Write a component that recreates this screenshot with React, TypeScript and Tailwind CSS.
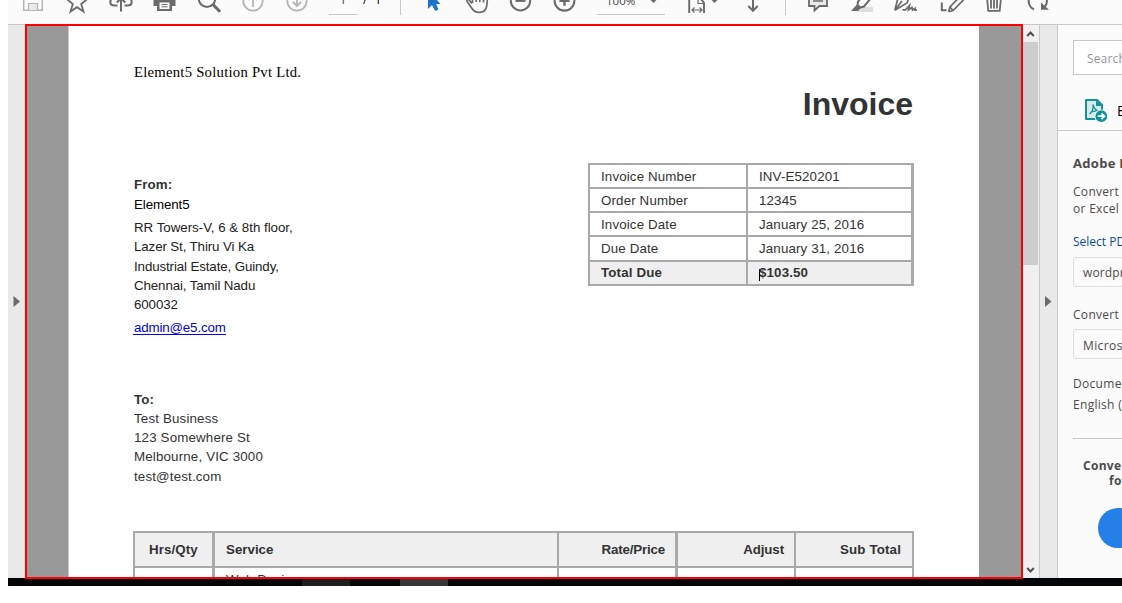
import type { ReactNode } from "react";

const sans = "font-['Liberation_Sans',Arial,sans-serif]";

function Tool({ w = "w-11", color = "text-[#6b6b6b]", children }: { w?: string; color?: string; children: ReactNode }) {
  return (
    <svg
      className={`h-5 shrink-0 ${w} ${color}`}
      viewBox="0 0 44 20"
      preserveAspectRatio="xMidYMin slice"
      fill="none"
      stroke="currentColor"
      strokeWidth="1.8"
    >
      {children}
    </svg>
  );
}

function Toolbar() {
  return (
    <div className="ml-2 flex h-6 items-start overflow-hidden bg-[#fbfbfb] pl-[3px] font-['Open_Sans',sans-serif] text-[12px] text-[#444]">
      <Tool color="text-[#b5b5b5]">
        <path d="M12.7-6V10.3H31.3V-6" strokeWidth="1.5" />
        <path d="M17.5 10V3.5H26.5V10" fill="#e9e9e9" strokeWidth="1.2" />
      </Tool>
      <Tool>
        <path d="M22-8L24.5-1L32-.7L26.2 4L28.5 11.5L22 7.2L15.5 11.5L17.8 4L12-.7L19.5-1Z" strokeWidth="1.8" />
      </Tool>
      <Tool>
        <path d="M18.5 5.5H15.5C10 5.5 10-1 15-2M25.5 5.5H28.5C34 5.5 34-1 29-2M22 11.5V-2M17.7 2.5L22-1.5L26.3 2.5" strokeWidth="2" />
      </Tool>
      <Tool w="w-[43px]">
        <path d="M11-4H33V6H29.5V11H14.5V6H11Z" fill="currentColor" stroke="none" />
        <path d="M17 2.5H27V9H17Z" fill="#fbfbfb" stroke="none" />
        <path d="M19 4.5H25M19 6.8H25" strokeWidth="1" />
      </Tool>
      <Tool w="w-[45px]">
        <circle cx="20.5" cy="-1.2" r="8" strokeWidth="2" />
        <path d="M26 4L33.3 11.5" strokeWidth="3" />
        <path d="M16-.5H24" stroke="#bbb" strokeWidth="1" strokeDasharray="2 1" />
      </Tool>
      <Tool color="text-[#b5b5b5]">
        <circle cx="22" cy="1" r="9.7" />
        <path d="M22 7V-5M18 0L22-3.5L26 0" />
      </Tool>
      <Tool color="text-[#b5b5b5]">
        <circle cx="22" cy="1" r="9.7" />
        <path d="M22-6V6M17.8 2L22 6L26.2 2" />
      </Tool>
      <div className="ml-[10px] flex h-[15px] w-7 justify-center border-b border-[#c8c8c8] leading-[18px]">
        <span className="-mt-[9px]">1</span>
      </div>
      <div className="ml-[6px] flex w-[37px] gap-[7px] leading-[18px] text-black">
        <span className="-mt-[9px]">/</span>
        <span className="-mt-[9px]">1</span>
      </div>
      <div className="h-[15px] w-px bg-[#c8c8c8]" />
      <div className="w-[11px]" />
      <Tool color="text-[#1d72c9]">
        <path d="M16-10V9L20 5L23.2 11L26.5 9.5L24 4H28.5Z" fill="currentColor" stroke="none" />
      </Tool>
      <Tool w="w-[43px]">
        <path d="M16.5 3.5L13.8.2C12-1.6 10.7 0 12 2L16.5 8.5C19.5 13.7 27.8 13.5 30.2 9C32 6 31.8 2 31.8-5M17 3V-5M20.7 2V-1M24.3 2V-1M28 2.5V-1" strokeWidth="1.7" />
      </Tool>
      <Tool w="w-[43px]">
        <circle cx="22" cy=".7" r="9.7" strokeWidth="2" />
        <path d="M17 .7H27" strokeWidth="2.4" />
      </Tool>
      <Tool w="w-[45px]">
        <circle cx="22" cy=".7" r="9.7" strokeWidth="2" />
        <path d="M17 .7H27M22-4V5.5" strokeWidth="2.4" />
      </Tool>
      <div className="ml-[10px] flex h-[15px] w-[68px] justify-between border-b border-[#c8c8c8] pr-2 pl-[9px] text-[11.5px] leading-[18px]">
        <span className="-mt-[8px]">100%</span>
        <svg className="h-[4px] w-[7px]" viewBox="0 0 7 4"><path d="M0-.5H7L3.5 3Z" fill="#6b6b6b" /></svg>
      </div>
      <div className="w-[10px]" />
      <Tool>
        <path d="M14.2 13V-4H24L29 3V13" strokeWidth="1.9" />
        <path d="M23-4V3.5H29M17 10H27M19.5 7.5L17 10L19.5 12.5M24.5 7.5L27 10L24.5 12.5" strokeWidth="1.2" />
        <path d="M36-.5H43L39.5 3Z" fill="currentColor" stroke="none" />
      </Tool>
      <div className="w-[12px]" />
      <Tool>
        <path d="M22-2V10.5M17.3 6L22 10.8L26.7 6" strokeWidth="2" />
      </Tool>
      <div className="ml-[10px] h-[15px] w-px bg-[#c8c8c8]" />
      <div className="w-[10px]" />
      <Tool>
        <path d="M13-5V6H18.5V10.5L23.5 6H31V-5Z" fill="#e9e9e9" strokeWidth="1.8" />
        <path d="M17 1H27" strokeWidth="1.5" />
      </Tool>
      <Tool>
        <path d="M22 7H33V12H17Z" fill="#dedede" stroke="none" />
        <path d="M24-5L18 1.5L17.5 5L20.5 7.5L24 6.5L31-2" strokeWidth="2" />
        <path d="M16.5 5L11 11H18L21 8Z" fill="currentColor" stroke="none" />
      </Tool>
      <Tool>
        <path d="M10.8 10.3L14.5-4M10.8 10.3L23 3L24.5-1M11 10L18 1M18.5 9.8H21.5L25.5 5.5L24.5 9.8L28 7.5L28.5 10L31 8.3V10.2H33" strokeWidth="1.7" />
      </Tool>
      <Tool>
        <path d="M13.8 2.5V10.2H18.5" strokeWidth="2" />
        <path d="M20.5 11.7L22 7L31.5-3L35 .5L25 10.5L20.5 11.7M22 7L25 10.5" strokeWidth="1.7" />
      </Tool>
      <Tool>
        <path d="M14.8-4L16.3 10.8H27.7L29.2-4M19 0V8.5M22 0V8.5M25 0V8.5" strokeWidth="1.8" />
      </Tool>
      <Tool>
        <path d="M18 9.3C12 6.5 11.5 0 14.5-4M27-5C32-2 32 3 28.5 7" strokeWidth="2" />
        <path d="M25 2.5V9.8H33Z" fill="currentColor" stroke="none" />
      </Tool>
    </div>
  );
}

const details = [
  ["Invoice Number", "INV-E520201"],
  ["Order Number", "12345"],
  ["Invoice Date", "January 25, 2016"],
  ["Due Date", "January 31, 2016"],
  ["Total Due", "$103.50"],
];

function InvoiceDetails() {
  return (
    <div className="mt-[39px] ml-auto grid h-[123px] w-[326px] grid-rows-[22px_22px_22px_23px_22px] gap-[2px] bg-[#a9a9a9] py-[2px] pr-[3px] pl-[2px] text-[13.33px] tracking-[0.14px] text-[#333]">
      {details.map(([label, value], i) => (
        <div key={label} className={`flex gap-[2px] ${i === 4 ? "leading-[22px] font-bold" : "leading-[24px]"}`}>
          <div className={`w-[156px] pl-[11px] ${i === 4 ? "bg-[#efefef]" : "bg-white"}`}>{label}</div>
          <div className={`relative flex-1 pl-[11px] ${i === 4 ? "bg-[#efefef]" : "bg-white"}`}>
            {value}
            {i === 4 && <span className="absolute top-[7px] left-[11px] h-3 w-px bg-black" />}
          </div>
        </div>
      ))}
    </div>
  );
}

function Services() {
  return (
    <div className="-ml-px flex h-[60px] w-[781px] flex-col gap-[2px] bg-[#a9a9a9] p-[2px] text-[13.33px] text-[#333]">
      <div className="grid h-[33px] grid-cols-[77px_345px_118px_119px_118px] leading-[33px] font-bold">
        <div className="bg-[#efefef] pl-[14px] tracking-[0.1px]">Hrs/Qty</div>
        <div className="ml-[3px] bg-[#efefef] pl-[11px]">Service</div>
        <div className="ml-[2px] bg-[#efefef] pr-[10px] text-right tracking-[-0.18px]">Rate/Price</div>
        <div className="ml-[3px] bg-[#efefef] pr-[10px] text-right tracking-[-0.1px]">Adjust</div>
        <div className="ml-[2px] bg-[#efefef] pr-[11px] text-right tracking-[0.15px]">Sub Total</div>
      </div>
      <div className="grid h-[30px] grid-cols-[77px_345px_118px_119px_118px] tracking-[0.1px]">
        <div className="bg-white" />
        <div className="ml-[3px] bg-white pt-[4px] pl-[11px] leading-[16px]">Web Design</div>
        <div className="ml-[2px] bg-white" />
        <div className="ml-[3px] bg-white" />
        <div className="ml-[2px] bg-white" />
      </div>
    </div>
  );
}

function Page() {
  return (
    <div className={`h-full w-[911px] shrink-0 overflow-hidden border-l border-[#c8c8c8] bg-white pl-[65px] text-[#333] ${sans}`}>
      <div className="w-[780px]">
        <div className="pt-[38px] font-['Liberation_Serif',serif] text-[14.7px] leading-4 tracking-[0.25px] whitespace-nowrap text-black">Element5 Solution Pvt Ltd.</div>
        <div className="mt-[4px] pr-px text-right text-[32px] leading-[40px] font-bold">Invoice</div>
        <div className="flex h-[366px] text-[13.33px] whitespace-nowrap">
          <div className="pt-[51px]">
            <div className="leading-[19px] font-bold tracking-[0.1px]">From:</div>
            <div className="leading-[21px] tracking-[-0.1px] text-black">Element5</div>
            <div className="mt-[3px] leading-[19.3px] tracking-[-0.12px] text-[#222]">
              <div className="tracking-[-0.02px]">RR Towers-V, 6 &amp; 8th floor,</div>
              <div>Lazer St, Thiru Vi Ka</div>
              <div>Industrial Estate, Guindy,</div>
              <div>Chennai, Tamil Nadu</div>
              <div>600032</div>
            </div>
            <div className="-ml-px mt-[6px] h-[15px] w-[93px] border-b border-[#0000ee] pl-px leading-[15px] tracking-[-0.16px] text-[#0000ee]">admin@e5.com</div>
            <div className="mt-[55px] leading-[19px] tracking-[0.16px]">
              <div className="font-bold">To:</div>
              <div>Test Business</div>
              <div>123 Somewhere St</div>
              <div>Melbourne, VIC 3000</div>
              <div className="mt-px">test@test.com</div>
            </div>
          </div>
          <InvoiceDetails />
        </div>
        <div className="mt-[41px]"><Services /></div>
      </div>
    </div>
  );
}

function ScrollBar() {
  return (
    <div className="flex w-4 shrink-0 flex-col justify-between bg-[#f0f0f0]">
      <div>
        <svg className="block h-[17px] w-[15px]" viewBox="0 0 15 17" fill="none" stroke="#505050" strokeWidth="2"><path d="M4.2 11L7.5 7.5L10.8 11" /></svg>
        <div className="h-[223px] w-[15px] bg-[#cdcdcd]" />
      </div>
      <svg className="h-[17px] w-[15px]" viewBox="0 0 15 17" fill="none" stroke="#505050" strokeWidth="2"><path d="M4.2 7L7.5 10.5L10.8 7" /></svg>
    </div>
  );
}

function ExportPanel() {
  return (
    <div className="min-w-0 flex-1 overflow-hidden border-l border-[#c8c8c8] bg-[#fbfbfb] font-['Open_Sans','Noto_Sans',sans-serif] text-[12px] tracking-[0.15px] whitespace-nowrap text-[#4b4b4b]">
      <div className="mt-[15px] ml-[15px] h-[35px] w-40 border border-[#c8c8c8] bg-white pl-[13px] leading-[36px] text-[#959595]">Search tools</div>
      <div className="flex h-[56px] items-end gap-[9px] border-b border-[#c8c8c8] pb-[7px] pl-[27px]">
        <svg className="h-6 w-[23px] shrink-0" viewBox="0 0 23 24" fill="none">
          <path d="M1 1H12L17 6V20H1Z" fill="#d5ebeb" stroke="#149196" strokeWidth="2" strokeLinejoin="round" />
          <path d="M11 1V7H17Z" fill="#149196" />
          <path d="M8 5.5C9 9 10 11 13 12C9 11.5 6.5 12.5 4.5 15C7 13 8.5 9 8 5.5Z" stroke="#149196" strokeWidth="1.2" />
          <circle cx="16.3" cy="17.2" r="6.8" fill="#fbfbfb" />
          <circle cx="16.3" cy="17.2" r="5.9" fill="#149196" />
          <path d="M12.8 17.2H19M16.5 14.3L19.5 17.2L16.5 20.1" stroke="white" strokeWidth="1.7" />
        </svg>
        <span className="text-[14px] leading-[24px] text-black">Export PDF</span>
      </div>
      <div className="pl-[15px]">
        <div className="mt-[23px] text-[13px] leading-[18px] font-bold tracking-[0.3px]">Adobe Export PDF</div>
        <div className="mt-[11px] leading-[17px] tracking-[0.3px]">Convert PDF Files to Word<br />or Excel Online</div>
        <div className="mt-[16px] leading-[17px] tracking-normal text-[#0b4a9b]">Select PDF File</div>
        <div className="mt-[7px] h-[30px] w-40 rounded-[3px] border border-[#dedede] pl-[9px] leading-[29px]">wordpress-pdf</div>
        <div className="mt-[19px] leading-[17px] tracking-[0.3px]">Convert to</div>
        <div className="mt-[6px] h-[30px] w-40 rounded-[3px] border border-[#dedede] pl-[9px] leading-[32px] tracking-[0.4px]">Microsoft Word</div>
        <div className="mt-[14px] leading-[21px] tracking-[0.3px]">Document Language:<br />English (U.S.)</div>
        <div className="mt-[23px] h-px w-40 bg-[#c8c8c8]" />
        <div className="mt-[19px] pl-[10px] leading-[15px] font-bold tracking-[0.3px]">Convert, edit<br /><span className="ml-[26px]">forms</span></div>
        <div className="mt-[20px] ml-[25px] h-10 w-32 rounded-full bg-[#267fe7]" />
      </div>
    </div>
  );
}

export default function App() {
  return (
    <div className="h-[603px] w-[1122px] overflow-hidden bg-white">
      <Toolbar />
      <div className="ml-2 flex h-[554px] w-[1114px]">
        <div className="flex w-[17px] shrink-0 items-center border-t border-[#c8c8c8] bg-[#e9e9e9] pl-[5px]">
          <svg className="h-[11px] w-[7px]" viewBox="0 0 7 11"><path d="M.5 0L7 5.5L.5 11Z" fill="#6b6b6b" /></svg>
        </div>
        <div className="z-10 flex h-[555px] w-[998px] shrink-0 border-2 border-[#ff0000] bg-[#999] pl-[41px]">
          <Page />
        </div>
        <div className="flex min-w-0 flex-1 border-t border-[#c8c8c8]">
          <ScrollBar />
          <div className="flex w-[19px] shrink-0 items-center border-l border-[#c8c8c8] bg-[#e9e9e9] pl-[5px]">
            <svg className="h-[11px] w-[7px]" viewBox="0 0 7 11"><path d="M0 0L6.5 5.5L0 11Z" fill="#6b6b6b" /></svg>
          </div>
          <div className="-ml-px flex min-w-0 flex-1"><ExportPanel /></div>
        </div>
      </div>
      <div className="ml-2 flex h-2 bg-[#030405] pl-[294px]">
        <div className="w-[48px] bg-[#1e1e1f]" />
        <div className="ml-[50px] w-[48px] bg-[#363636]" />
      </div>
    </div>
  );
}
